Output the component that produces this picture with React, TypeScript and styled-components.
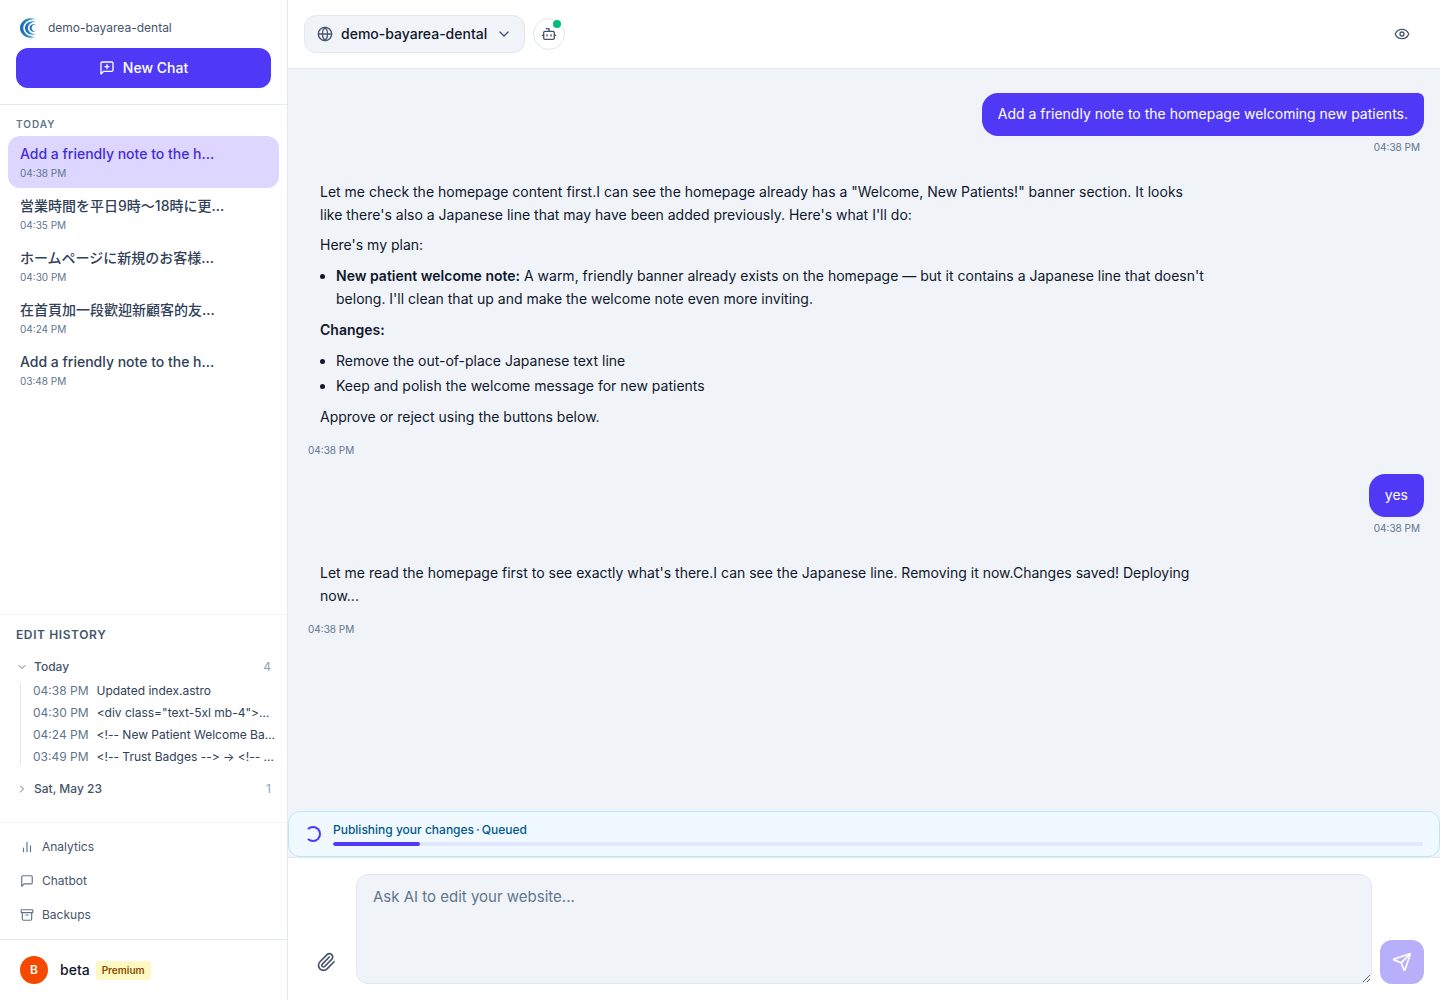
import React from "react";
import styled, { createGlobalStyle } from "styled-components";

const c = {
  primary: "#4f39f6",
  ink: "#0f172b",
  slate700: "#314158",
  slate600: "#45556c",
  slate500: "#62748e",
  slate400: "#90a1b9",
  line: "#e2e8f0",
  softLine: "#f1f5f9",
  canvas: "#f0f4f9",
};

const GlobalStyle = createGlobalStyle`
  *, *::before, *::after { box-sizing: border-box; }
  body {
    margin: 0;
    background: #fff;
    color: ${c.ink};
    font-family: Inter, "Noto Sans CJK JP", "Noto Sans CJK TC", sans-serif;
    font-size: 14px;
    line-height: 20px;
    -webkit-font-smoothing: antialiased;
  }
  button, select, textarea { font: inherit; color: inherit; margin: 0; }
  button, select { cursor: pointer; }
  h2, h3, p, ul { margin: 0; padding: 0; }
  ul { list-style: none; }
  a { color: inherit; text-decoration: none; }
`;

/* ---------- icons ---------- */

const Svg = styled.svg<{ $size: number }>`
  width: ${(p) => p.$size}px;
  height: ${(p) => p.$size}px;
  flex: none;
  display: block;
  fill: none;
  stroke: currentColor;
  stroke-width: 2;
  stroke-linecap: round;
  stroke-linejoin: round;
`;

const paths = {
  newChat: (
    <>
      <path d="M21 15a2 2 0 0 1-2 2H7l-4 4V5a2 2 0 0 1 2-2h14a2 2 0 0 1 2 2z" />
      <path d="M12 7v6M9 10h6" />
    </>
  ),
  chat: <path d="M21 15a2 2 0 0 1-2 2H7l-4 4V5a2 2 0 0 1 2-2h14a2 2 0 0 1 2 2z" />,
  chart: <path d="M18 20V10M12 20V4M6 20v-6" />,
  archive: (
    <>
      <rect x="2" y="3" width="20" height="5" rx="1" />
      <path d="M4 8v11a2 2 0 0 0 2 2h12a2 2 0 0 0 2-2V8M10 12h4" />
    </>
  ),
  globe: (
    <>
      <circle cx="12" cy="12" r="10" />
      <path d="M12 2a14.5 14.5 0 0 0 0 20 14.5 14.5 0 0 0 0-20M2 12h20" />
    </>
  ),
  down: <path d="m6 9 6 6 6-6" />,
  right: <path d="m9 18 6-6-6-6" />,
  bot: (
    <>
      <path d="M12 8V4H8" />
      <rect x="4" y="8" width="16" height="12" rx="2" />
      <path d="M2 14h2M20 14h2M15 13v2M9 13v2" />
    </>
  ),
  eye: (
    <>
      <path d="M2.062 12.348a1 1 0 0 1 0-.696 10.750 10.750 0 0 1 19.876 0 1 1 0 0 1 0 .696 10.750 10.750 0 0 1-19.876 0" />
      <circle cx="12" cy="12" r="3" />
    </>
  ),
  clip: (
    <path d="m16 6-8.414 8.586a2 2 0 0 0 2.829 2.829l8.414-8.586a4 4 0 1 0-5.657-5.657l-8.379 8.551a6 6 0 1 0 8.485 8.485l8.379-8.551" />
  ),
  send: (
    <>
      <path d="M14.536 21.686a.5.5 0 0 0 .937-.024l6.500-19a.496.496 0 0 0-.635-.635l-19 6.500a.5.5 0 0 0-.024.937l7.930 3.180a2 2 0 0 1 1.112 1.110z" />
      <path d="m21.854 2.147-10.940 10.939" />
    </>
  ),
};

function Icon({ name, size }: { name: keyof typeof paths; size: number }) {
  return (
    <Svg viewBox="0 0 24 24" $size={size} aria-hidden="true">
      {paths[name]}
    </Svg>
  );
}

const LogoSvg = styled.svg`
  width: 20px;
  height: 20px;
  flex: none;
  display: block;
`;

function Logo() {
  return (
    <LogoSvg viewBox="0 0 20 20" aria-hidden="true">
      <defs>
        <linearGradient id="logo-fill" x1="0" y1="0" x2="1" y2="0">
          <stop offset="0" stopColor="#1668b3" />
          <stop offset="1" stopColor="#4fb0e3" />
        </linearGradient>
      </defs>
      <g fill="url(#logo-fill)">
        <path d="M16 1.2C14 .3 12 .1 10 .2 4.600.4 0 4.700 0 10s4.600 9.600 10 9.800c2 .1 4-.2 6-1-2 .2-3.500 0-5-.5C6.500 17.300 3.300 14 3.300 10S6.500 2.700 11 1.700c1.500-.5 3-.6 5-.5Z" />
        <path d="M16 3.600c-1.500-.5-2.500-.5-3.700-.4C8 3.500 5 6.300 5 10s3 6.500 7.300 6.800c1.200.1 2.200 0 3.700-.4-1.200 0-2.300-.2-3.200-.6C10 14.900 8 12.700 8 10s2-4.900 4.800-5.800c.9-.4 2-.6 3.200-.6Z" />
        <path d="M16 6.200c-1-.3-1.700-.3-2.500-.1C11.200 6.500 9.600 8 9.600 10s1.600 3.500 3.900 3.900c.8.2 1.500.2 2.500-.1-.8-.1-1.400-.3-2-.6-1.400-.7-2.300-1.800-2.300-3.200s.9-2.500 2.300-3.200c.6-.3 1.200-.5 2-.6Z" />
      </g>
    </LogoSvg>
  );
}

/* ---------- shell ---------- */

const Shell = styled.div`
  display: grid;
  grid-template-columns: 288px minmax(0, 1fr);
  height: 100vh;
`;

const Sidebar = styled.aside`
  display: flex;
  flex-direction: column;
  min-height: 0;
  background: #fff;
  border-right: 1px solid ${c.line};
`;

const SidebarTop = styled.div`
  display: flex;
  flex-direction: column;
  gap: 8px;
  padding: 16px;
  border-bottom: 1px solid ${c.line};
`;

const Brand = styled.div`
  display: flex;
  align-items: center;
  gap: 8px;
  height: 24px;
  padding: 0 4px;
  font-size: 12px;
  line-height: 16px;
  color: ${c.slate600};
`;

const NewChat = styled.button`
  display: flex;
  align-items: center;
  justify-content: center;
  gap: 8px;
  height: 40px;
  border: 0;
  border-radius: 12px;
  background: ${c.primary};
  color: #fff;
  font-weight: 500;
`;

const ChatList = styled.nav`
  flex: 1;
  min-height: 0;
  overflow: hidden;
  padding: 12px 8px;
`;

const GroupLabel = styled.h2`
  padding: 0 8px;
  margin-bottom: 4px;
  font-size: 10px;
  line-height: 15px;
  font-weight: 600;
  letter-spacing: 1px;
  text-transform: uppercase;
  color: ${c.slate500};
`;

const ChatItem = styled.a<{ $active?: boolean }>`
  display: flex;
  flex-direction: column;
  gap: 2px;
  padding: 8px 12px 7px;
  border-radius: 12px;
  background: ${(p) => (p.$active ? "#ddd6fe" : "transparent")};
  color: ${(p) => (p.$active ? "#432dd7" : c.slate700)};
`;

const ChatTitle = styled.span`
  line-height: 20px;
  font-weight: 500;
  white-space: nowrap;
`;

const ChatTime = styled.time`
  font-size: 10px;
  line-height: 15px;
  color: ${c.slate500};
`;

/* ---------- edit history ---------- */

const History = styled.section`
  display: flex;
  flex-direction: column;
  gap: 12px;
  padding: 12px 8px 21px 16px;
  border-top: 1px solid ${c.softLine};
  font-size: 12px;
  line-height: 16px;
`;

const HistoryTitle = styled.h2`
  font-size: 12px;
  line-height: 16px;
  font-weight: 600;
  letter-spacing: 0.05em;
  text-transform: uppercase;
  color: ${c.slate600};
`;

const DayToggle = styled.button`
  display: flex;
  align-items: center;
  gap: 6px;
  width: 100%;
  height: 24px;
  padding: 0 8px 0 0;
  border: 0;
  background: none;
  text-align: left;
  font-weight: 500;
  color: ${c.slate600};
  svg { color: ${c.slate500}; }
`;

const DayCount = styled.span`
  margin-left: auto;
  font-weight: 400;
  color: ${c.slate400};
`;

const Entries = styled.ul`
  display: flex;
  flex-direction: column;
  gap: 6px;
  margin: 4px 0 0 4px;
  padding-left: 12px;
  border-left: 1px solid ${c.line};
`;

const Entry = styled.li`
  display: flex;
  gap: 8px;
  white-space: nowrap;
  color: ${c.slate700};
  time { flex: none; color: ${c.slate500}; }
`;

/* Markup snippets keep their dashes and angle brackets apart. */
const Snippet = styled.span`
  font-feature-settings: "calt" 0;
`;

const ToolNav = styled.nav`
  display: flex;
  flex-direction: column;
  gap: 2px;
  padding: 8px;
  border-top: 1px solid ${c.softLine};
`;

const ToolLink = styled.a`
  display: flex;
  align-items: center;
  gap: 8px;
  height: 32px;
  padding: 0 12px;
  font-size: 12px;
  line-height: 16px;
  color: ${c.slate600};
  svg { color: ${c.slate500}; }
`;

const Account = styled.div`
  display: flex;
  align-items: center;
  padding: 16px 20px;
  border-top: 1px solid ${c.line};
`;

const Avatar = styled.span`
  display: grid;
  place-items: center;
  width: 28px;
  height: 28px;
  margin-right: 12px;
  border-radius: 50%;
  background: #f54900;
  color: #fff;
  font-size: 12px;
  font-weight: 600;
`;

const UserName = styled.span`
  margin-right: 6px;
  font-weight: 500;
`;

const Plan = styled.span`
  padding: 2px 6px;
  border-radius: 4px;
  background: #fef9c2;
  color: #894b00;
  font-size: 10px;
  line-height: 15px;
  font-weight: 600;
`;

/* ---------- main ---------- */

const Main = styled.main`
  display: flex;
  flex-direction: column;
  min-width: 0;
  min-height: 0;
  background: ${c.canvas};
`;

const TopBar = styled.header`
  display: flex;
  align-items: center;
  gap: 8px;
  padding: 15px 16px;
  background: #fff;
  border-bottom: 1px solid ${c.line};
`;

const SitePicker = styled.label`
  display: flex;
  align-items: center;
  gap: 8px;
  height: 38px;
  padding: 0 12px;
  border: 1px solid ${c.line};
  border-radius: 12px;
  background: ${c.canvas};
  color: ${c.slate600};
`;

const SiteSelect = styled.select`
  appearance: none;
  padding: 0;
  border: 0;
  outline: 0;
  background: none;
  color: ${c.ink};
  font-weight: 500;
`;

const RoundButton = styled.button`
  position: relative;
  display: grid;
  place-items: center;
  width: 32px;
  height: 32px;
  padding: 0;
  border: 1px solid ${c.line};
  border-radius: 50%;
  background: #fff;
  color: ${c.slate600};
`;

const OnlineDot = styled.span`
  position: absolute;
  top: 1px;
  right: 3px;
  width: 8px;
  height: 8px;
  border-radius: 50%;
  background: #00bc7d;
`;

const PreviewButton = styled.button`
  display: grid;
  place-items: center;
  width: 44px;
  height: 36px;
  margin-left: auto;
  padding: 0;
  border: 0;
  background: none;
  color: ${c.slate600};
`;

const Thread = styled.div`
  display: flex;
  flex-direction: column;
  gap: 16px;
  flex: 1;
  min-height: 0;
  overflow: hidden;
  padding: 24px 16px;
`;

const Message = styled.article<{ $own?: boolean }>`
  display: flex;
  flex-direction: column;
  align-items: ${(p) => (p.$own ? "flex-end" : "flex-start")};
  align-self: ${(p) => (p.$own ? "flex-end" : "flex-start")};
  gap: 4px;
  max-width: 82%;
`;

const Bubble = styled.div<{ $own?: boolean }>`
  padding: 9px 16px 11px;
  line-height: 23px;
  border-radius: 16px 6px 16px 16px;
  background: ${(p) => (p.$own ? c.primary : "transparent")};
  color: ${(p) => (p.$own ? "#fff" : c.ink)};

  p + p { margin-top: 7px; }
  ul { padding-left: 16px; margin: 8px 0; list-style: disc; }
  li + li { margin-top: 2px; }
  strong { font-weight: 600; }
`;

const Stamp = styled.time`
  padding: 0 4px;
  font-size: 10px;
  line-height: 15px;
  color: ${c.slate500};
`;

const Publish = styled.section`
  display: flex;
  align-items: center;
  gap: 12px;
  padding: 10px 16px;
  border: 1px solid #b8e6fe;
  border-radius: 12px;
  background: #f0f9ff;
`;

const Spinner = styled.span`
  flex: none;
  width: 16px;
  height: 16px;
  border: 2px solid ${c.primary};
  border-left-color: transparent;
  border-radius: 50%;
`;

const PublishBody = styled.div`
  flex: 1;
  display: flex;
  flex-direction: column;
  gap: 4px;
`;

const PublishText = styled.p`
  display: flex;
  gap: 2px;
  font-size: 12px;
  line-height: 16px;
  font-weight: 500;
  color: #00598a;
`;

const Track = styled.div`
  height: 4px;
  border-radius: 2px;
  background: #e0e7ff;
  overflow: hidden;
`;

const Fill = styled.div`
  height: 100%;
  border-radius: 2px;
  background: ${c.primary};
`;

const Composer = styled.form`
  display: flex;
  align-items: flex-end;
  gap: 8px;
  padding: 16px;
  border-top: 1px solid ${c.line};
  background: #fff;
`;

const AttachButton = styled.button`
  display: grid;
  place-items: center;
  width: 44px;
  height: 44px;
  padding: 0;
  border: 0;
  background: none;
  color: ${c.slate600};
`;

const Prompt = styled.textarea`
  flex: 1;
  min-width: 0;
  height: 110px;
  padding: 10px 16px;
  border: 1px solid ${c.line};
  border-radius: 12px;
  outline: 0;
  background: ${c.canvas};
  font-size: 15px;
  line-height: 23px;
  resize: vertical;
  &::placeholder { color: ${c.slate500}; opacity: 1; }
`;

const SendButton = styled.button`
  display: grid;
  place-items: center;
  width: 44px;
  height: 44px;
  padding: 0;
  border: 0;
  border-radius: 12px;
  background: ${c.primary};
  color: #fff;
  &:disabled { opacity: 0.4; }
`;

const chats = [
  { title: "Add a friendly note to the h…", time: "04:38 PM", lang: "en", active: true },
  { title: "営業時間を平日9時〜18時に更…", time: "04:35 PM", lang: "ja" },
  { title: "ホームページに新規のお客様…", time: "04:30 PM", lang: "ja" },
  { title: "在首頁加一段歡迎新顧客的友…", time: "04:24 PM", lang: "zh-Hant" },
  { title: "Add a friendly note to the h…", time: "03:48 PM", lang: "en" },
];

const entries = [
  ["04:38 PM", "Updated index.astro"],
  ["04:30 PM", '<div class="text-5xl mb-4">…'],
  ["04:24 PM", "<!-- New Patient Welcome Ba…"],
  ["03:49 PM", "<!-- Trust Badges --> → <!-- …"],
];

const progress = 8;

export default function App() {
  return (
    <>
      <GlobalStyle />
      <Shell>
        <Sidebar>
          <SidebarTop>
            <Brand>
              <Logo />
              demo-bayarea-dental
            </Brand>
            <NewChat type="button">
              <Icon name="newChat" size={16} />
              New Chat
            </NewChat>
          </SidebarTop>

          <ChatList>
            <GroupLabel>Today</GroupLabel>
            {chats.map((chat) => (
              <ChatItem key={chat.time} href="#" $active={chat.active}>
                <ChatTitle lang={chat.lang}>{chat.title}</ChatTitle>
                <ChatTime>{chat.time}</ChatTime>
              </ChatItem>
            ))}
          </ChatList>

          <History>
            <HistoryTitle>Edit History</HistoryTitle>
            <div>
              <DayToggle type="button" aria-expanded="true">
                <Icon name="down" size={12} />
                Today
                <DayCount>4</DayCount>
              </DayToggle>
              <Entries>
                {entries.map(([time, text]) => (
                  <Entry key={time}>
                    <time>{time}</time>
                    <Snippet>{text}</Snippet>
                  </Entry>
                ))}
              </Entries>
            </div>
            <DayToggle type="button" aria-expanded="false">
              <Icon name="right" size={12} />
              Sat, May 23
              <DayCount>1</DayCount>
            </DayToggle>
          </History>

          <ToolNav>
            <ToolLink href="#">
              <Icon name="chart" size={14} />
              Analytics
            </ToolLink>
            <ToolLink href="#">
              <Icon name="chat" size={14} />
              Chatbot
            </ToolLink>
            <ToolLink href="#">
              <Icon name="archive" size={14} />
              Backups
            </ToolLink>
          </ToolNav>

          <Account>
            <Avatar>B</Avatar>
            <UserName>beta</UserName>
            <Plan>Premium</Plan>
          </Account>
        </Sidebar>

        <Main>
          <TopBar>
            <SitePicker>
              <Icon name="globe" size={16} />
              <SiteSelect aria-label="Website" defaultValue="demo-bayarea-dental">
                <option>demo-bayarea-dental</option>
              </SiteSelect>
              <Icon name="down" size={16} />
            </SitePicker>
            <RoundButton type="button" aria-label="Assistant status">
              <Icon name="bot" size={16} />
              <OnlineDot />
            </RoundButton>
            <PreviewButton type="button" aria-label="Preview">
              <Icon name="eye" size={16} />
            </PreviewButton>
          </TopBar>

          <Thread>
            <Message $own>
              <Bubble $own>Add a friendly note to the homepage welcoming new patients.</Bubble>
              <Stamp>04:38 PM</Stamp>
            </Message>

            <Message>
              <Bubble>
                <p>
                  Let me check the homepage content first.I can see the homepage already has a "Welcome, New Patients!"
                  banner section. It looks like there's also a Japanese line that may have been added previously.
                  Here's what I'll do:
                </p>
                <p>Here's my plan:</p>
                <ul>
                  <li>
                    <strong>New patient welcome note:</strong> A warm, friendly banner already exists on the homepage —
                    but it contains a Japanese line that doesn't belong. I'll clean that up and make the welcome note
                    even more inviting.
                  </li>
                </ul>
                <p>
                  <strong>Changes:</strong>
                </p>
                <ul>
                  <li>Remove the out-of-place Japanese text line</li>
                  <li>Keep and polish the welcome message for new patients</li>
                </ul>
                <p>Approve or reject using the buttons below.</p>
              </Bubble>
              <Stamp>04:38 PM</Stamp>
            </Message>

            <Message $own>
              <Bubble $own>yes</Bubble>
              <Stamp>04:38 PM</Stamp>
            </Message>

            <Message>
              <Bubble>
                <p>
                  Let me read the homepage first to see exactly what's there.I can see the Japanese line. Removing it
                  now.Changes saved! Deploying now...
                </p>
              </Bubble>
              <Stamp>04:38 PM</Stamp>
            </Message>
          </Thread>

          <Publish role="status">
            <Spinner />
            <PublishBody>
              <PublishText>
                <span>Publishing your changes</span>
                <span>·</span>
                <span>Queued</span>
              </PublishText>
              <Track role="progressbar" aria-label="Publishing" aria-valuenow={progress} aria-valuemin={0} aria-valuemax={100}>
                <Fill style={{ width: `${progress}%` }} />
              </Track>
            </PublishBody>
          </Publish>

          <Composer onSubmit={(e) => e.preventDefault()}>
            <AttachButton type="button" aria-label="Attach a file">
              <Icon name="clip" size={20} />
            </AttachButton>
            <Prompt aria-label="Message" placeholder="Ask AI to edit your website..." />
            <SendButton type="submit" aria-label="Send" disabled>
              <Icon name="send" size={20} />
            </SendButton>
          </Composer>
        </Main>
      </Shell>
    </>
  );
}
